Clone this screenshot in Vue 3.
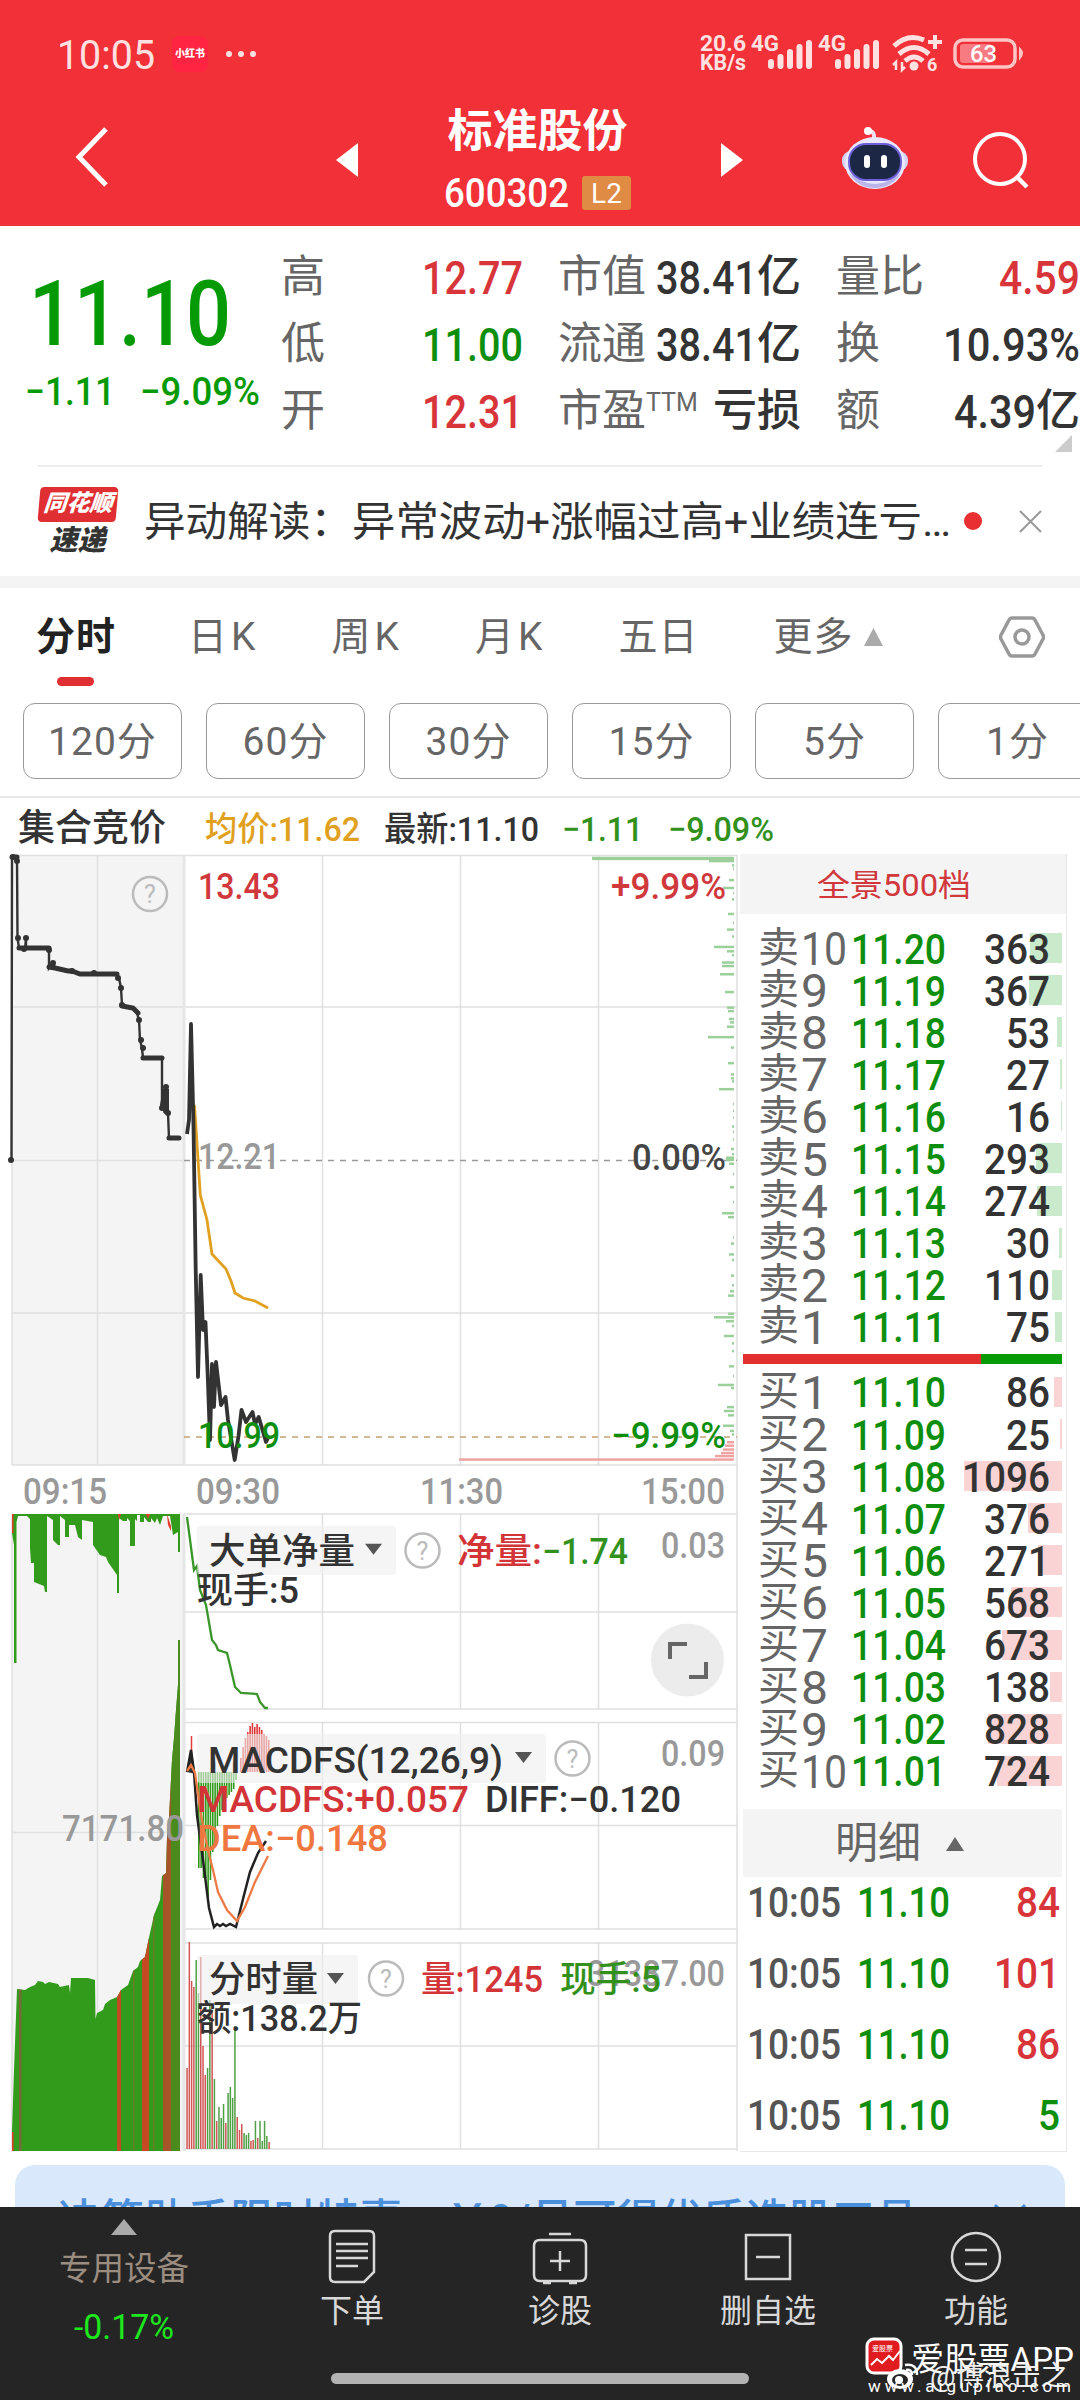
<template>
  <div class="page">
    <header class="header">
      <div class="status-bar">
        <FitText class="clock" text="10:05" :w="98" />
        <span class="app-badge">小红书</span>
        <span class="dots"><i></i><i></i><i></i></span>
        <svg class="status-icons" width="330" height="50" viewBox="700 30 330 50">
          <g fill="#ffe1e1" font-weight="700" font-size="22">
            <text x="700" y="52" textLength="46" lengthAdjust="spacingAndGlyphs">20.6</text>
            <text x="700" y="71" textLength="46" lengthAdjust="spacingAndGlyphs">KB/s</text>
            <text x="751" y="52" textLength="28" lengthAdjust="spacingAndGlyphs">4G</text>
            <text x="818" y="52" textLength="28" lengthAdjust="spacingAndGlyphs">4G</text>
          </g>
          <path
            v-for="x in [771, 838]"
            :key="x"
            :d="`M${x} 67v-4M${x + 9.5} 67v-9M${x + 19} 67v-14M${x + 28.5} 67v-19M${x + 38} 67v-23`"
            stroke="#ffe1e1"
            stroke-width="6"
            stroke-linecap="round"
          />
          <g fill="none" stroke="#ffe1e1" stroke-width="5">
            <path d="M894 47Q908 34 924 41M899 55q15-13 30 0M905 62q9-8 18 0" />
            <path d="M928 43h14M935 36v14" stroke-width="4" />
            <path d="M896 71v-8l-3 3M902 63v8l3-3" stroke-width="2.5" />
          </g>
          <circle cx="914" cy="67" r="4.5" fill="#ffe1e1" />
          <text x="927" y="72" font-size="18" font-weight="700" fill="#ffe1e1">6</text>
          <rect x="955" y="41" width="60" height="27" rx="8" fill="none" stroke="#ffc4c4" stroke-width="3.5" />
          <rect x="960" y="45" width="32" height="19" rx="3" fill="#f77b80" />
          <path d="M1020 50q4 4 0 9z" fill="#ffc4c4" stroke="#ffc4c4" stroke-width="2" />
          <text x="970" y="63" font-size="24" font-weight="500" fill="#fff" textLength="27" lengthAdjust="spacingAndGlyphs">63</text>
        </svg>
      </div>
      <div class="title-bar">
        <svg class="back" width="36" height="62" viewBox="0 0 36 62">
          <path d="M32 3 5 31l27 28" fill="none" stroke="#fff" stroke-width="5" />
        </svg>
        <svg class="prev" width="22" height="34"><path d="M22 0v34L0 17z" fill="#fff" /></svg>
        <div class="stock">
          <div class="stock-name">标准股份</div>
          <div class="stock-code">
            <FitText text="600302" :w="125" />
            <span class="level">L2</span>
          </div>
        </div>
        <svg class="next" width="22" height="34"><path d="M0 0v34l22-17z" fill="#fff" /></svg>
        <svg class="robot" width="70" height="64" viewBox="0 0 70 64">
          <path d="M34 13Q35 5 29 5" fill="none" stroke="#f6dff0" stroke-width="4" />
          <circle cx="28" cy="5" r="4" fill="#fff" />
          <rect x="2" y="25" width="66" height="20" rx="9" fill="#d5d3f4" />
          <ellipse cx="35" cy="37" rx="30" ry="26" fill="#e9e8ff" />
          <path d="M9 47q26 22 52 0-9 15-26 15T9 47z" fill="#b9b4ea" />
          <rect x="9" y="18" width="52" height="36" rx="17" fill="#1c2746" stroke="#6c5fd8" stroke-width="2" />
          <rect x="24" y="29" width="6" height="13" rx="3" fill="#fff" />
          <rect x="41" y="29" width="6" height="13" rx="3" fill="#fff" />
        </svg>
        <svg class="search" width="60" height="60" viewBox="0 0 60 60">
          <circle cx="28" cy="28" r="25" fill="none" stroke="#fff" stroke-width="4" />
          <path d="m45 46 10 10" stroke="#fff" stroke-width="4.5" />
        </svg>
      </div>
    </header>

    <section class="quote">
      <div class="price-box">
        <FitText class="price" text="11.10" :w="202" />
        <div class="change">
          <FitText text="−1.11" :w="90" />
          <FitText text="−9.09%" :w="120" />
        </div>
      </div>
      <div class="stats">
        <div v-for="s in stats" :key="s.label" class="stat">
          <span class="stat-label">{{ s.label }}<sup v-if="s.sup">{{ s.sup }}</sup></span>
          <span class="stat-value" :class="s.tone">
            <FitText v-if="s.num" :text="s.num" :w="s.w" />{{ s.unit }}
          </span>
        </div>
      </div>
      <svg class="corner" width="17" height="17"><path d="M17 0v17H0z" fill="#ccc" /></svg>
    </section>

    <section class="news">
      <div class="news-logo">
        <span class="logo-top">同花顺</span>
        <span class="logo-bottom">速递</span>
      </div>
      <FitText class="news-text" text="异动解读：" :w="208" />
      <FitText class="news-text" text="异常波动+涨幅过高+业绩连亏…" :w="599" />
      <i class="news-dot"></i>
      <svg class="close" width="23" height="23"><path d="m1 1 21 21M22 1 1 22" stroke="#999" stroke-width="2" /></svg>
    </section>

    <nav class="tabs">
      <span v-for="(t, i) in tabs" :key="t" class="tab" :class="{ active: i === 0 }">{{ t }}</span>
      <svg class="more" width="19" height="18"><path d="M9.5 0 19 18H0z" fill="#aaa" /></svg>
      <svg class="gear" width="46" height="42" viewBox="0 0 46 42">
        <path d="M13 2h20q2 0 3 2l8 15q1 2 0 4l-8 15q-1 2-3 2H13q-2 0-3-2L2 23q-1-2 0-4l8-15q1-2 3-2z" fill="none" stroke="#999" stroke-width="3.5" />
        <circle cx="23" cy="21" r="7" fill="none" stroke="#999" stroke-width="3.5" />
      </svg>
    </nav>
    <div class="periods">
      <span v-for="p in periods" :key="p" class="period">{{ p }}</span>
    </div>

    <div class="legend">
      <span class="legend-title">集合竞价</span>
      <FitText class="avg" text="均价:11.62" :w="155" />
      <FitText class="last" text="最新:11.10" :w="155" />
      <FitText class="diff" text="−1.11" :w="81" />
      <FitText class="pct" text="−9.09%" :w="106" />
    </div>

    <main class="body">
      <svg class="chart" width="740" height="1300" viewBox="0 854 740 1300">
        <rect x="12" y="855" width="172" height="610" fill="#f4f4f4" />
        <rect x="12" y="1514" width="172" height="637" fill="#f4f4f4" />
        <!-- grid -->
        <g fill="none" stroke="#e0e0e0" stroke-width="1.5">
          <path d="M12 855.5H737M12 1007H737M12 1160.5H184M12 1313H737M12 1465H737M12 855V1465M97.5 855V1465M322.5 855V1465M460.5 855V1465M598.5 855V1465M737 855V2151" />
          <path d="M12 1514V2151M97.5 1514V2151M12 1832.5H184" />
          <path v-for="r in panes" :key="r[0]" :d="`M184 ${r[0]}H737M184 ${r[1]}H737M184 ${r[2]}H737M322.5 ${r[0]}V${r[2]}M460.5 ${r[0]}V${r[2]}M598.5 ${r[0]}V${r[2]}`" />
        </g>
        <path d="M184 855V1465M184 1514V2151" stroke="#e6e6e6" stroke-width="3" />
        <path d="M184 1160.5H737" stroke="#999" stroke-width="1.5" stroke-dasharray="6 6" />
        <path d="M184 1437H737" stroke="#c3a173" stroke-width="1.5" stroke-dasharray="6 6" />

        <!-- chips by price on the right edge -->
        <rect
          v-for="(d, i) in depth"
          :key="i"
          :x="734 - d[1]"
          :y="839 + d[0] * 0.4337"
          :width="d[1]"
          height="2.5"
          :fill="d[0] > 1380 ? '#f0a3a3' : '#9bd09b'"
        />

        <!-- call auction -->
        <polyline :points="auction" fill="none" stroke="#333" stroke-width="2.4" />
        <path d="M12 857h5M19 948h30M49 967l6 1 13 3h4l8 3h37M122 1006l11 2 5 5M143 1058h19M169 1138h10" fill="none" stroke="#333" stroke-width="5" stroke-linecap="round" />
        <path d="M163 1105l3-16v22" fill="none" stroke="#333" stroke-width="6" stroke-linecap="round" />
        <g fill="#333">
          <circle v-for="(p, i) in auctionDots" :key="i" :cx="p[0]" :cy="p[1]" r="3" />
        </g>

        <!-- intraday -->
        <polyline points="194.5,1105 200.3,1195 207,1220 212,1254 226,1269 231,1281 235,1293 243,1298 255,1301 268,1308" fill="none" stroke="#e0a020" stroke-width="2.8" />
        <polyline points="187,1134 189,1120 191,1024 193.5,1126 195.7,1269 198,1377 200.7,1275 203,1330 205.5,1322 208,1383 210,1440 212,1364 214,1407 216,1362 221,1405 225.5,1397 228,1420 234.7,1460 238.5,1436 241.5,1410 246,1422 252.5,1412 255,1424 258.7,1417 266,1442 268,1438" fill="none" stroke="#333" stroke-width="3.8" stroke-linejoin="round" />

        <!-- auction volume -->
        <path d="M12 1514V1533L14 1545V1663H16.500V1522L18 1516H27L30 1519V1548L31 1563H34V1582L44 1586 45 1592H47V1516L53 1520V1540L58 1545H60V1516L65 1520V1537H69V1525H75L78 1537 82 1540V1520L93 1522V1545L100 1555 106 1557 108 1562 117 1575V1593H119V1518L123 1521H127V1518L130 1521V1546H135V1519L137 1521V1515H140V1522H144V1517L148 1522H151V1518L155 1523 157 1518 160 1525 163 1516H170L173 1535 178 1532V1552H180V1514z" fill="#329b1c" />
        <path d="M12 1514h1.5v19H12zM118 1514h3l-2 6zM167 1514l4 12v5l-3-6zM146 1514h4l-2 5z" fill="#e23b2b" />
        <path :d="volumeShape" fill="#329b1c" />
        <clipPath id="volume-clip"><path :d="volumeShape" /></clipPath>
        <g clip-path="url(#volume-clip)">
          <rect x="19" y="1640" width="2.5" height="511" fill="#776a38" />
          <rect x="117" y="1640" width="4" height="511" fill="#c54a24" />
          <rect x="142" y="1640" width="7" height="511" fill="#c54a24" />
          <rect x="133" y="1640" width="1.5" height="511" fill="#6d7d25" />
          <rect x="153" y="1640" width="1.5" height="511" fill="#6d7d25" />
          <rect x="163" y="1640" width="8" height="511" fill="#a65528" />
          <rect x="171" y="1640" width="9" height="511" fill="#4b8b1d" />
          <rect x="12" y="2132" width="1.5" height="19" fill="#e23b2b" />
        </g>

        <!-- net volume of large orders -->
        <polyline points="187,1517 194,1570 197,1566 200,1590 206,1605 212,1640 216,1645 218,1650 227,1653 230,1665 235,1687 241,1693 257,1694 260,1702 265,1708 268,1708" fill="none" stroke="#3a962a" stroke-width="2.3" />

        <!-- macd -->
        <rect v-for="(b, i) in macdDown" :key="'d' + i" :x="198 + i * 2.33" y="1772" width="1.6" :height="b" fill="#329b1c" />
        <rect v-for="(b, i) in macdUp" :key="'u' + i" :x="240 + i * 2.33" :y="1772 - b" width="1.6" :height="b" fill="#e23b3b" />
        <path d="M191.5 1736v20" stroke="#e23b3b" stroke-width="1.5" />
        <path d="M187 1772l4.5-22 4 24z" fill="#333" />
        <polyline points="187,1772 191,1750 194,1772 197,1815 203,1860 209,1908 214,1927 217,1924 220,1926 223,1924 226,1926 230,1924 236,1927 243,1899 250,1872 258,1853 266,1841" fill="none" stroke="#222" stroke-width="2.5" />
        <polyline points="187,1771 191,1765 195,1773 201,1815 208,1850 213,1870 218,1892 227,1910 237,1921 245,1907 255,1882 268,1856" fill="none" stroke="#ee7a45" stroke-width="2.3" />

        <!-- minute volume -->
        <rect v-for="(v, i) in minuteVolume" :key="'v' + i" :x="186.3 + i * 2.28" :y="2149 - Math.abs(v)" width="1.5" :height="Math.abs(v)" :fill="v < 0 ? '#4ea045' : '#d25555'" />

        <!-- indicator selectors -->
        <g v-for="s in selectors" :key="s.y">
          <rect x="197" :y="s.y" :width="s.w" height="49" rx="4" fill="#efefef" fill-opacity="0.6" />
          <path :d="`M${197 + s.w - 31} ${s.y + 18}h17l-8.5 11z`" fill="#555" />
        </g>
        <g v-for="h in helps" :key="h[1]">
          <circle :cx="h[0]" :cy="h[1]" r="17" fill="none" stroke="#bbb" stroke-width="2.5" />
          <text :x="h[0]" :y="h[1] + 9" font-size="25" fill="#bbb" text-anchor="middle">?</text>
        </g>
        <circle cx="687.5" cy="1660" r="36.5" fill="#ececec" />
        <path d="M670 1659v-15h17M689 1677h17v-15" fill="none" stroke="#666" stroke-width="4" />

        <text
          v-for="l in labels"
          :key="l.t + l.y"
          :x="l.x"
          :y="l.y"
          :textLength="l.w"
          lengthAdjust="spacingAndGlyphs"
          :fill="l.c"
          font-size="36"
          font-weight="500"
        >{{ l.t }}</text>
      </svg>

      <aside class="book">
        <div class="book-head"><FitText text="全景500档" :w="154" /></div>
        <div class="orders sell">
          <div v-for="(q, i) in sells" :key="i" class="order">
            <i class="order-bar" :style="{ width: q * 0.0895 + 'px' }"></i>
            <span class="side">卖</span>
            <FitText class="level-no" :text="String(10 - i)" :w="i === 0 ? 46 : 27" />
            <FitText class="order-price" :text="(11.2 - i * 0.01).toFixed(2)" :w="95" />
            <FitText class="order-qty" :text="String(q)" :w="String(q).length * 22" />
          </div>
        </div>
        <div class="ratio"><i></i></div>
        <div class="orders buy">
          <div v-for="(q, i) in buys" :key="i" class="order">
            <i class="order-bar" :style="{ width: q * 0.0895 + 'px' }"></i>
            <span class="side">买</span>
            <FitText class="level-no" :text="String(i + 1)" :w="i === 9 ? 46 : 27" />
            <FitText class="order-price" :text="(11.1 - i * 0.01).toFixed(2)" :w="95" />
            <FitText class="order-qty" :text="String(q)" :w="String(q).length * 22" />
          </div>
        </div>
        <div class="detail-head">
          明细
          <svg width="18" height="14"><path d="M9 0l9 14H0z" fill="#666" /></svg>
        </div>
        <div v-for="(t, i) in trades" :key="i" class="trade">
          <FitText class="trade-time" text="10:05" :w="94" />
          <FitText class="green" text="11.10" :w="93" />
          <FitText class="trade-qty" :class="i === 3 ? 'green' : 'red'" :text="t" :w="t.length * 22" />
        </div>
      </aside>
    </main>

    <div class="banner">
      <FitText text="决策助手限时特惠，￥9/月可得优质选股工具" :w="860" />
      <svg width="34" height="34"><path d="m2 2 30 30M32 2 2 32" stroke="#4a8fdc" stroke-width="3" /></svg>
    </div>

    <footer class="footer">
      <div class="device">
        <svg width="26" height="16"><path d="M13 0l13 16H0z" fill="#aaa" /></svg>
        <span class="device-name">专用设备</span>
        <FitText class="device-pct" text="-0.17%" :w="100" />
      </div>
      <div class="nav">
        <svg width="50" height="56" viewBox="0 0 50 56">
          <path d="M8 2h34q5 0 5 5v36L37 53H8q-5 0-5-5V7q0-5 5-5zM9 15h32M9 22h32M9 29h32M9 37h22" />
        </svg>
        <span>下单</span>
      </div>
      <div class="nav">
        <svg width="58" height="56" viewBox="0 0 58 56">
          <path d="M18 5h22M9 11h40q6 0 6 6v29q0 6-6 6H9q-6 0-6-6V17q0-6 6-6zM29 22v20M19 32h20M12 54h8M38 54h8" />
        </svg>
        <span>诊股</span>
      </div>
      <div class="nav">
        <svg width="50" height="56" viewBox="0 0 50 56">
          <path d="M3 6h44v44H3zM13 28h24" />
        </svg>
        <span>删自选</span>
      </div>
      <div class="nav">
        <svg width="54" height="56" viewBox="0 0 54 56">
          <circle cx="27" cy="28" r="24" />
          <path d="M16 21h22M16 35h22" />
        </svg>
        <span>功能</span>
      </div>
      <i class="home-bar"></i>
      <svg class="watermark" width="220" height="66" viewBox="860 2334 220 66">
        <rect x="867" y="2339" width="34" height="34" rx="7" fill="#e11c20" stroke="#fff" stroke-width="3" />
        <text x="872" y="2351" font-size="7" fill="#fff">爱股票</text>
        <path d="m871 2365 6-6 5 4 7-7 4 4 7-9" fill="none" stroke="#fff" stroke-width="2" />
        <text x="911" y="2371" font-size="33" fill="#fff" textLength="163" lengthAdjust="spacingAndGlyphs">爱股票APP</text>
        <ellipse cx="900" cy="2379" rx="13" ry="10" fill="#fff" />
        <ellipse cx="900" cy="2380" rx="8" ry="6" fill="#252525" />
        <circle cx="899" cy="2380" r="4" fill="#fff" />
        <path d="M905 2365q12-2 12 10M906 2370q6-1 6 5" fill="none" stroke="#fff" stroke-width="2.5" />
        <text x="930" y="2386" font-size="28" fill="#eee" textLength="139" lengthAdjust="spacingAndGlyphs">@博浪击之</text>
        <text x="868" y="2392" font-size="17" fill="#fff" textLength="203">www.aigupiao.com</text>
      </svg>
    </footer>
  </div>
</template>

<script setup>
import { h } from 'vue'

const FitText = (props) =>
  h('svg', { class: 'fit', width: props.w, height: '1em' }, [
    h('text', { x: 0, y: '0.86em', textLength: props.w, lengthAdjust: 'spacingAndGlyphs', fill: 'currentColor' }, props.text),
  ])
FitText.props = ['text', 'w']

const stats = [
  { label: '高', num: '12.77', w: 101, tone: 'red' },
  { label: '市值', num: '38.41', w: 101, unit: '亿' },
  { label: '量比', num: '4.59', w: 81, tone: 'red' },
  { label: '低', num: '11.00', w: 101, tone: 'green' },
  { label: '流通', num: '38.41', w: 101, unit: '亿' },
  { label: '换', num: '10.93%', w: 137 },
  { label: '开', num: '12.31', w: 101, tone: 'red' },
  { label: '市盈', sup: 'TTM', unit: '亏损' },
  { label: '额', num: '4.39', w: 82, unit: '亿' },
]

const tabs = ['分时', '日K', '周K', '月K', '五日', '更多']
const periods = ['120分', '60分', '30分', '15分', '5分', '1分']

const sells = [363, 367, 53, 27, 16, 293, 274, 30, 110, 75]
const buys = [86, 25, 1096, 376, 271, 568, 673, 138, 828, 724]
const trades = ['84', '101', '86', '5']

// top, middle and bottom line of each indicator pane
const panes = [
  [1514, 1612, 1709],
  [1722.5, 1825.5, 1929],
  [1943, 2046, 2149],
]

const auction =
  '11.5,1160 12,857 17,858 17.5,938 19,948 25,949 26,938 26,948 46,948 49,950 49,968 53,963 55,968 68,971 80,974 94,974 117,975 119,978 121,988 122,1005 133,1008 137,1013 139,1020 140,1040 142,1048 143,1058 162,1058 162,1108 166,1087 166,1113 168,1113 169,1138 180,1138'
const auctionDots = [
  [11, 1160], [13, 857], [17, 861], [18, 938], [26, 938], [24, 949], [49, 950], [53, 963], [72, 971], [94, 973],
  [118, 978], [121, 988], [122, 1005], [139, 1020], [141, 1040], [143, 1048], [166, 1087], [162, 1108], [168, 1113],
]

const volumeShape =
  'M12 2151V2132L14 2070 17 1989 25 1990 30 1987 35 1985 38 1981 43 1982 45 1984 49 1982 58 1984 60 1987 69 1985 70 1993 71 1978H88L95 1980 95.5 2019 97 2013 103 2010 105 2004 110 2000 117 1997 121 1990 128 1985 133 1971 138 1967 140 1961 145 1957 148 1942 154 1915 160 1900 162 1876 166 1873 167 1838 169 1818 172 1760 174 1738 176 1710 178 1685V1640H180V2151z'

const depth = [
  [41, 142], [43, 142], [48, 25], [58, 2], [66, 1], [92, 5], [110, 11], [122, 1], [136, 2], [170, 6], [190, 1],
  [206, 7], [222, 2], [246, 20], [256, 7], [265, 2], [282, 12], [290, 12], [309, 14], [350, 9], [386, 7], [394, 6],
  [412, 5], [420, 4], [430, 7], [454, 26], [478, 3], [514, 6], [540, 3], [549, 3], [556, 2], [574, 15], [608, 1],
  [624, 1], [640, 1], [660, 2], [672, 1], [690, 1], [712, 3], [724, 2], [732, 8], [737, 8], [746, 5], [770, 1],
  [800, 4], [834, 1], [860, 12], [869, 6], [916, 1], [930, 3], [955, 5], [968, 2], [1004, 3], [1026, 2], [1040, 4],
  [1050, 6], [1092, 6], [1100, 20], [1109, 8], [1120, 2], [1143, 10], [1160, 2], [1178, 2], [1213, 5], [1235, 1],
  [1256, 16], [1263, 3], [1307, 7], [1316, 10], [1326, 6], [1350, 11], [1362, 4], [1370, 2], [1388, 7], [1396, 9],
  [1405, 11], [1413, 13], [1420, 19], [1428, 275],
]

const macdDown = [96, 96, 106, 106, 125, 108, 80, 72, 54, 44, 38, 30, 26, 23, 20, 17, 8]
const macdUp = [14, 25, 34, 40, 46, 49, 45, 48, 45, 42, 38, 36, 32]
// negative values are falling minutes
const minuteVolume = [
  81, 207, 168, 162, -189, -156, 192, 103, 74, -81, -149, 139, -70, 28, -42, -31, -45, 26, -56, -62, -51, -123, 32,
  19, 25, -16, -14, -16, 8, 9, -28, 11, -28, -8, -28, -13, 7,
]

const selectors = [
  { y: 1525.7, w: 199 },
  { y: 1734, w: 349 },
  { y: 1955, w: 161 },
]
const helps = [
  [150, 894],
  [422.5, 1550.5],
  [572.5, 1758.5],
  [386, 1978.5],
]

const labels = [
  { t: '13.43', x: 198, y: 899, w: 82, c: '#d0383c' },
  { t: '12.21', x: 198, y: 1169, w: 82, c: '#999' },
  { t: '10.99', x: 198, y: 1448, w: 82, c: '#0d8f0d' },
  { t: '+9.99%', x: 611, y: 899, w: 115, c: '#d0383c' },
  { t: '0.00%', x: 632, y: 1169.5, w: 94, c: '#444' },
  { t: '−9.99%', x: 611, y: 1448, w: 115, c: '#0d8f0d' },
  { t: '09:15', x: 23, y: 1504, w: 84, c: '#999' },
  { t: '09:30', x: 196, y: 1504, w: 84, c: '#999' },
  { t: '11:30', x: 420, y: 1504, w: 83, c: '#999' },
  { t: '15:00', x: 641, y: 1504, w: 84, c: '#999' },
  { t: '大单净量', x: 209, y: 1564, w: 146, c: '#333' },
  { t: '净量:', x: 457, y: 1564, w: 85, c: '#d33438' },
  { t: '−1.74', x: 542, y: 1564, w: 86, c: '#32911c' },
  { t: '0.03', x: 661, y: 1558, w: 64, c: '#999' },
  { t: '现手:5', x: 197, y: 1603, w: 102, c: '#333' },
  { t: '7171.80', x: 62, y: 1841, w: 122, c: '#999' },
  { t: 'MACDFS(12,26,9)', x: 208, y: 1773, w: 295, c: '#333' },
  { t: '0.09', x: 661, y: 1766, w: 64, c: '#999' },
  { t: 'MACDFS:+0.057', x: 197, y: 1812, w: 272, c: '#d33438' },
  { t: 'DIFF:−0.120', x: 485, y: 1812, w: 196, c: '#333' },
  { t: 'DEA:−0.148', x: 197, y: 1851, w: 191, c: '#f07840' },
  { t: '31387.00', x: 587, y: 1986, w: 138, c: '#999' },
  { t: '分时量', x: 209, y: 1992, w: 109, c: '#333' },
  { t: '量:1245', x: 421, y: 1992, w: 122, c: '#d33438' },
  { t: '现手:5', x: 560, y: 1992, w: 101, c: '#32911c' },
  { t: '额:138.2万', x: 197, y: 2031, w: 165, c: '#333' },
]
</script>

<style>
body {
  background: #fff;
}
</style>

<style scoped>
.page {
  width: 1080px;
  height: 2400px;
  display: flex;
  flex-direction: column;
  overflow: hidden;
  background: #fff;
  color: #333;
  font-family: Roboto, 'Noto Sans CJK SC', sans-serif;
  line-height: 1;
}

.page > * {
  flex-shrink: 0;
}

.page svg,
.page i {
  display: block;
  flex-shrink: 0;
}

.fit {
  overflow: visible;
  font-weight: 500;
}

.red {
  color: #d8353a;
}

.green {
  color: #0d8f0d;
}

/* header */
.header {
  height: 226px;
  box-sizing: border-box;
  background: #f13037;
  color: #fff;
}

.status-bar {
  display: flex;
  align-items: center;
  height: 80px;
  padding: 28px 50px 0 57px;
  box-sizing: border-box;
}

.clock {
  font-size: 41px;
  color: #ffe1e1;
}

.clock.fit {
  font-weight: 400;
}

.app-badge {
  width: 36px;
  height: 36px;
  margin-left: 17px;
  border-radius: 8px;
  background: #ff2442;
  font-size: 10px;
  font-weight: 900;
  line-height: 36px;
  text-align: center;
}

.dots {
  display: flex;
  gap: 6px;
  margin-left: 18px;
}

.dots i {
  width: 6px;
  height: 6px;
  border-radius: 50%;
  background: #ffe1e1;
}

.status-icons {
  margin-left: auto;
}

.title-bar {
  display: flex;
  align-items: flex-start;
  height: 146px;
  padding-left: 74px;
}

.back {
  margin-top: 46px;
}

.prev {
  margin: 63px 0 0 226px;
}

.stock {
  width: 361px;
  padding: 29px 2px 0 0;
  box-sizing: border-box;
  text-align: center;
}

.stock-name {
  font-size: 45px;
  font-weight: 700;
}

.stock-code {
  display: flex;
  align-items: center;
  justify-content: center;
  gap: 13px;
  margin-top: 19px;
  font-size: 40px;
}

.level {
  width: 49px;
  height: 34px;
  border-radius: 3px;
  background: #e08b43;
  font-size: 28px;
  line-height: 35px;
}

.next {
  margin: 63px 0 0 2px;
}

.robot {
  margin: 46px 0 0 97px;
}

.search {
  margin: 51px 0 0 62px;
}

/* quote */
.quote {
  position: relative;
  display: flex;
  height: 240px;
  box-sizing: border-box;
}

.quote::after {
  content: '';
  position: absolute;
  left: 38px;
  right: 38px;
  bottom: -1px;
  border-bottom: 2px solid #eee;
}

.price-box {
  width: 281px;
  box-sizing: border-box;
  padding: 41px 0 0 29px;
  color: #069a06;
}

.price {
  font-size: 91px;
}

.change {
  display: flex;
  gap: 25px;
  margin: 13px 0 0 -4px;
  font-size: 39px;
}

.stats {
  display: grid;
  grid-template-columns: 242px 243px 244px;
  grid-auto-rows: 67px;
  column-gap: 35px;
  padding-top: 17px;
  flex: 1;
}

.stat {
  display: flex;
  align-items: center;
  justify-content: space-between;
  font-size: 44px;
}

.stat-label {
  color: #666;
  display: flex;
}

.stat-label sup {
  font-size: 25px;
  margin: 1px 0 0;
  line-height: 1;
  vertical-align: top;
}

.stat-value {
  display: flex;
  align-items: center;
  font-weight: 500;
}

.stat-value .fit {
  font-size: 46px;
}

.corner {
  position: absolute;
  right: 8px;
  bottom: 14px;
}

/* news */
.news {
  display: flex;
  align-items: center;
  height: 110px;
  padding-left: 37px;
}

.news-logo {
  display: flex;
  flex-direction: column;
  align-items: center;
  gap: 5px;
  width: 81px;
  margin-right: 26px;
  font-style: italic;
  font-weight: 900;
}

.logo-top {
  width: 78px;
  height: 35px;
  border-radius: 4px;
  background: #e02f32;
  color: #fff;
  font-size: 23px;
  line-height: 33px;
  text-align: center;
  transform: skewX(-5deg);
}

.logo-bottom {
  font-size: 28px;
}

.news-text {
  font-size: 41px;
}

.news-text.fit {
  font-weight: 400;
}

.news-dot {
  width: 18px;
  height: 18px;
  margin-left: 13px;
  border-radius: 50%;
  background: #e92f32;
}

.close {
  margin-left: 37px;
}

/* tabs */
.tabs {
  display: flex;
  align-items: center;
  height: 127px;
  padding: 0 35px 17px 36px;
  border-top: 12px solid #f4f4f4;
  box-sizing: border-box;
  font-size: 39px;
  color: #666;
}

.tab {
  position: relative;
  margin-right: 72px;
  letter-spacing: 1px;
  white-space: nowrap;
}

.tab:nth-child(2),
.tab:nth-child(3),
.tab:nth-child(4) {
  letter-spacing: 4px;
}

.tab:nth-child(5) {
  margin-right: 75px;
}

.tab:nth-child(6) {
  margin-right: 10px;
}

.tab.active {
  color: #222;
  font-weight: 700;
}

.tab.active::after {
  content: '';
  position: absolute;
  left: 21px;
  bottom: -29px;
  width: 37px;
  height: 9px;
  border-radius: 5px;
  background: #e02f32;
}

.gear {
  margin-left: auto;
}

.periods {
  display: flex;
  gap: 24px;
  height: 95px;
  padding-left: 23px;
  border-bottom: 2px solid #e8e8e8;
  box-sizing: border-box;
}

.period {
  flex: none;
  width: 159px;
  height: 76px;
  border: 1.5px solid #999;
  border-radius: 12px;
  box-sizing: border-box;
  color: #666;
  font-size: 39px;
  letter-spacing: 1px;
  line-height: 76px;
  text-align: center;
}

.legend {
  display: flex;
  align-items: center;
  height: 56px;
  padding: 5px 0 0 18px;
  box-sizing: border-box;
  font-size: 34px;
}

.legend-title {
  width: 187px;
  font-size: 37px;
  font-weight: 500;
}

.avg {
  margin-right: 24px;
  color: #e0a020;
}

.last {
  margin-right: 23px;
}

.diff,
.pct {
  margin-right: 25px;
  color: #32911c;
}

/* chart and order book */
.body {
  display: flex;
  height: 1300px;
}

.book {
  width: 327px;
  height: 1298px;
  border: 1px solid #e8e8e8;
  border-top: 0;
  border-left: 0;
  box-sizing: border-box;
}

.book-head {
  display: flex;
  align-items: center;
  height: 60px;
  padding-left: 77px;
  background: #f4f4f4;
  color: #d0383c;
  font-size: 31px;
}

.book-head .fit {
  font-weight: 400;
}

.orders {
  width: 322px;
}

.sell {
  padding-top: 13px;
}

.buy {
  padding-top: 7px;
}

.order {
  position: relative;
  display: flex;
  align-items: center;
  height: 42.1px;
  padding-left: 18px;
}

.order-bar {
  position: absolute;
  right: 0;
  top: 6px;
  height: 30px;
  background: #c9eacb;
}

.buy .order-bar {
  background: #fad3d4;
}

.side {
  width: 43px;
  color: #666;
  font-size: 41px;
}

.level-no {
  color: #666;
  font-size: 46px;
}

.level-no.fit {
  font-weight: 400;
}

.order-price {
  position: absolute;
  left: 111px;
  color: #0d8f0d;
  font-size: 43px;
}

.order-qty {
  position: absolute;
  right: 12px;
  font-size: 43px;
}

.ratio {
  width: 319px;
  height: 10px;
  margin: 6px 0 0 3px;
  background: #069a06;
}

.ratio i {
  width: 238px;
  height: 10px;
  background: #e2302f;
}

.detail-head {
  display: flex;
  align-items: center;
  gap: 25px;
  width: 319px;
  height: 68px;
  margin: 17px 0 0 3px;
  padding: 2px 0 0 92px;
  box-sizing: border-box;
  background: #f4f4f4;
  color: #666;
  font-size: 43px;
}

.trade {
  display: flex;
  align-items: center;
  height: 50px;
  margin-bottom: 21px;
  padding: 0 6px 0 7px;
  font-size: 42px;
}

.trade-time {
  margin-right: 16px;
  color: #555;
}

.trade-qty {
  margin-left: auto;
}

/* banner */
.banner {
  display: flex;
  align-items: flex-start;
  height: 42px;
  margin: 11px 15px 0;
  padding: 33px 38px 0 43px;
  border-radius: 20px 20px 0 0;
  box-sizing: border-box;
  background: #dae8fb;
  color: #4a8fdc;
  font-size: 44px;
  justify-content: space-between;
  overflow: hidden;
}

.banner svg:last-child {
  margin-top: 5px;
}

/* footer */
.footer {
  position: relative;
  display: grid;
  grid-template-columns: 248px repeat(4, 208px);
  height: 193px;
  background: #252525;
  color: #d8d8d8;
}

.device {
  display: flex;
  flex-direction: column;
  align-items: center;
  padding-top: 12px;
}

.device-name {
  margin: 18px 0 23px;
  color: #9b8d80;
  font-size: 32.5px;
}

.device-pct {
  color: #1de81d;
  font-size: 35px;
}

.device-pct.fit {
  font-weight: 400;
}

.nav {
  display: flex;
  flex-direction: column;
  align-items: center;
  gap: 10px;
  padding-top: 22px;
  font-size: 32px;
}

.nav svg {
  fill: none;
  stroke: #d8d8d8;
  stroke-width: 2.5;
}

.home-bar {
  position: absolute;
  left: 331px;
  bottom: 16px;
  width: 418px;
  height: 11px;
  border-radius: 6px;
  background: #b3b3b3;
}

.watermark {
  position: absolute;
  right: 0;
  bottom: 0;
}
</style>
